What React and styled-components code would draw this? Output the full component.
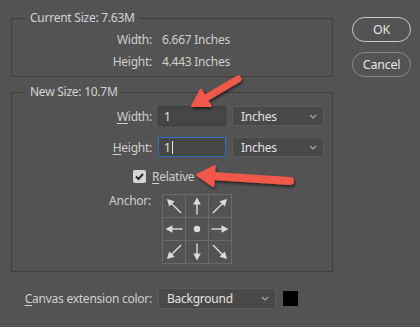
import React from "react";
import styled, { createGlobalStyle } from "styled-components";

const Global = createGlobalStyle`
  html, body { margin: 0; padding: 0; }
  body {
    background: #535353;
    font-family: "Noto Sans", "Open Sans", sans-serif;
    font-size: 12px;
    letter-spacing: -0.25px;
    color: #d2d2d2;
  }
`;

const Page = styled.div`
  position: relative;
  width: 420px;
  height: 327px;
  box-sizing: border-box;
  padding: 10px 9px 0 11px;
  display: flex;
  gap: 19px;
  background: #535353;
`;

const Main = styled.div`
  width: 322px;
  display: flex;
  flex-direction: column;
`;

const Group = styled.fieldset`
  margin: ${(p) => (p.$first ? "0" : "7px 0 0")};
  border: 1px solid #3f3f3f;
  padding: ${(p) => p.$pad};
  min-width: 0;
`;

const Legend = styled.legend`
  margin-left: 14px;
  padding: 0 4px;
  line-height: 16px;
  color: #d4d4d4;
`;

const InfoGrid = styled.div`
  display: grid;
  grid-template-columns: 140px auto;
  column-gap: 10px;
  grid-auto-rows: 22px;
  align-items: center;
`;

const Label = styled.span`
  text-align: right;
  color: #cfcfcf;
  white-space: nowrap;
`;

const Value = styled.span`
  color: #cfcfcf;
`;

const U = styled.span`
  text-decoration: underline;
  text-underline-offset: 2px;
`;

const SizeRows = styled.div`
  display: flex;
  flex-direction: column;
  gap: 11px;
`;

const SizeRow = styled.div`
  display: grid;
  grid-template-columns: 140px 68px 92px;
  column-gap: 6px;
  align-items: center;
`;

const Input = styled.div`
  height: 20px;
  box-sizing: border-box;
  border: 1px solid ${(p) => (p.$focus ? "#2f6fc2" : "#3e3e3e")};
  background: #464646;
  padding: 0 5px;
  display: flex;
  align-items: center;
  color: #e2e2e2;
`;

const Caret = styled.span`
  display: inline-block;
  width: 1px;
  height: 13px;
  margin-left: 1px;
  background: #e6e6e6;
`;

const Select = styled.div`
  height: ${(p) => p.$h || 20}px;
  box-sizing: border-box;
  border: 1px solid #5a5a5a;
  border-radius: 2px;
  background: #494949;
  padding: 0 6px 0 8px;
  display: flex;
  align-items: center;
  justify-content: space-between;
  color: #e2e2e2;
`;

const CheckRow = styled.div`
  margin-top: 13px;
  padding-left: 121px;
  display: flex;
  align-items: center;
  gap: 6px;
  height: 13px;
`;

const Box = styled.div`
  width: 13px;
  height: 13px;
  border-radius: 2px;
  background: #d6d6d6;
  display: flex;
  align-items: center;
  justify-content: center;
`;

const AnchorRow = styled.div`
  margin-top: 11px;
  display: grid;
  grid-template-columns: 139px auto;
  column-gap: 11px;
  align-items: start;
`;

const AnchorLabel = styled(Label)`
  line-height: 14px;
`;

const AnchorGrid = styled.div`
  display: grid;
  grid-template-columns: repeat(3, 22px);
  grid-auto-rows: 22px;
  gap: 1px;
  padding: 1px;
  width: max-content;
  background: #6a6a6a;
`;

const Cell = styled.div`
  background: #535353;
  display: flex;
  align-items: center;
  justify-content: center;
`;

const BottomRow = styled.div`
  margin-top: 16px;
  display: grid;
  grid-template-columns: 141px 118px 15px;
  column-gap: 6px;
  align-items: center;
`;

const Swatch = styled.div`
  width: 15px;
  height: 15px;
  background: #000;
  margin-left: 1px;
`;

const Buttons = styled.div`
  padding-top: 7px;
  display: flex;
  flex-direction: column;
  gap: 10px;
`;

const Button = styled.button`
  width: 59px;
  height: 25px;
  border-radius: 13px;
  border: 1.5px solid ${(p) => (p.$primary ? "#c9c9c9" : "#8a8a8a")};
  background: transparent;
  color: #e4e4e4;
  font-family: "Noto Sans", "Open Sans", sans-serif;
  font-size: 12.5px;
  letter-spacing: -0.25px;
  padding: 0;
`;

const Overlay = styled.svg`
  position: absolute;
  left: 0;
  top: 0;
  pointer-events: none;
`;

const Chevron = () => (
  <svg width="8" height="5" viewBox="0 0 8 5">
    <path d="M1 1 L4 4 L7 1" fill="none" stroke="#a8a8a8" strokeWidth="1.2" />
  </svg>
);

const Check = () => (
  <svg width="11" height="11" viewBox="0 0 11 11">
    <path d="M2 5.5 L4.5 8 L9 3" fill="none" stroke="#2e2e2e" strokeWidth="2" />
  </svg>
);

const AnchorArrow = ({ angle }) => {
  const diag = angle % 90 !== 0;
  const tip = diag ? 1 : 2.5;
  const tail = diag ? 21 : 19.5;
  const base = tip + 7;
  return (
    <svg width="22" height="22" viewBox="0 0 22 22">
      <g transform={`rotate(${angle} 11 11)`}>
        <line x1="11" y1={tail} x2="11" y2={base - 0.5} stroke="#dcdcdc" strokeWidth="1.4" />
        <polygon points={`11,${tip} 7.2,${base} 14.8,${base}`} fill="#dcdcdc" />
      </g>
    </svg>
  );
};

const Dot = () => (
  <svg width="22" height="22" viewBox="0 0 22 22">
    <circle cx="11" cy="11" r="3.2" fill="#dcdcdc" />
  </svg>
);

const anchors = [-45, 0, 45, -90, null, 90, -135, 180, 135];

function Arrow({ tail, tip, shaft, headLen, headW }) {
  const dx = tip[0] - tail[0];
  const dy = tip[1] - tail[1];
  const L = Math.hypot(dx, dy);
  const ux = dx / L;
  const uy = dy / L;
  const px = -uy;
  const py = ux;
  const bx = tip[0] - ux * headLen;
  const by = tip[1] - uy * headLen;
  const pts = [
    [tip[0], tip[1]],
    [bx + (px * headW) / 2, by + (py * headW) / 2],
    [bx - (px * headW) / 2, by - (py * headW) / 2],
  ]
    .map((p) => p.join(","))
    .join(" ");
  return (
    <g filter="url(#shadow)">
      <line
        x1={tail[0]}
        y1={tail[1]}
        x2={bx + ux * 2}
        y2={by + uy * 2}
        stroke="#f0584a"
        strokeWidth={shaft}
        strokeLinecap="round"
      />
      <polygon points={pts} fill="#f0584a" stroke="#f0584a" strokeWidth="2" strokeLinejoin="round" />
    </g>
  );
}

export default function App() {
  return (
    <>
      <Global />
      <Page>
        <Main>
          <Group $first $pad="2px 0 4px">
            <Legend>Current Size: 7.63M</Legend>
            <InfoGrid>
              <Label>Width:</Label>
              <Value>6.667 Inches</Value>
              <Label>Height:</Label>
              <Value>4.443 Inches</Value>
            </InfoGrid>
          </Group>
          <Group $pad="6px 0 7px">
            <Legend>New Size: 10.7M</Legend>
            <SizeRows>
              <SizeRow>
                <Label>
                  <U>W</U>idth:
                </Label>
                <Input>1</Input>
                <Select>
                  Inches <Chevron />
                </Select>
              </SizeRow>
              <SizeRow>
                <Label>
                  <U>H</U>eight:
                </Label>
                <Input $focus>
                  1<Caret />
                </Input>
                <Select>
                  Inches <Chevron />
                </Select>
              </SizeRow>
            </SizeRows>
            <CheckRow>
              <Box>
                <Check />
              </Box>
              <Label>
                <U>R</U>elative
              </Label>
            </CheckRow>
            <AnchorRow>
              <AnchorLabel>Anchor:</AnchorLabel>
              <AnchorGrid>
                {anchors.map((a, i) => (
                  <Cell key={i}>{a === null ? <Dot /> : <AnchorArrow angle={a} />}</Cell>
                ))}
              </AnchorGrid>
            </AnchorRow>
          </Group>
          <BottomRow>
            <Label>
              <U>C</U>anvas extension color:
            </Label>
            <Select $h={21}>
              Background <Chevron />
            </Select>
            <Swatch />
          </BottomRow>
        </Main>
        <Buttons>
          <Button $primary>OK</Button>
          <Button>Cancel</Button>
        </Buttons>
        <Overlay width="420" height="327" viewBox="0 0 420 327">
          <defs>
            <filter id="shadow" x="-20%" y="-50%" width="140%" height="200%">
              <feDropShadow dx="1" dy="2" stdDeviation="1.5" floodColor="#000" floodOpacity="0.6" />
            </filter>
          </defs>
          <Arrow tail={[238, 79]} tip={[192, 106]} shaft={7} headLen={16} headW={19} />
          <Arrow tail={[290, 181]} tip={[197, 175]} shaft={8} headLen={17} headW={20} />
        </Overlay>
      </Page>
    </>
  );
}
